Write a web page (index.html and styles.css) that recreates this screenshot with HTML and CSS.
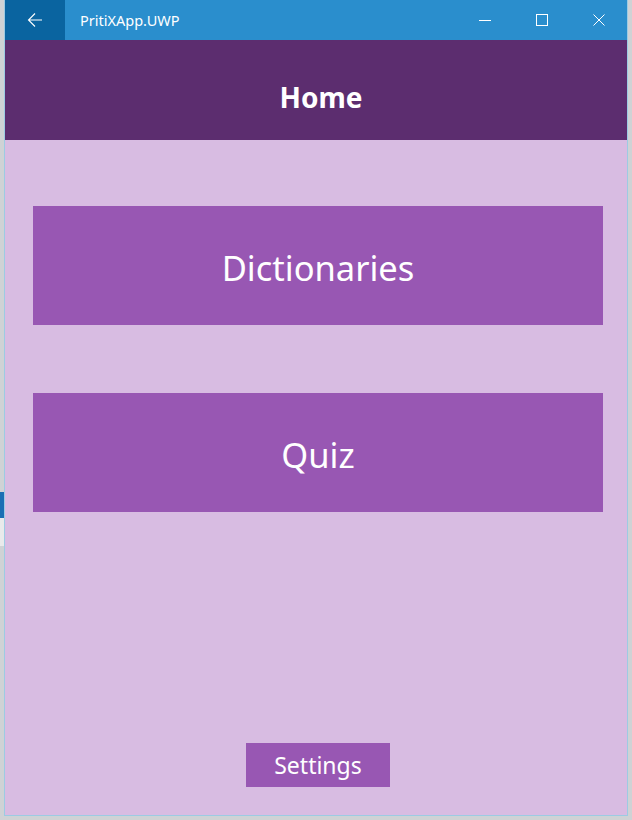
FILE: index.html
```html
<!DOCTYPE html>
<html>
<head>
<meta charset="utf-8">
<link rel="stylesheet" href="styles.css">
</head>
<body>
<div class="desk">
  <div class="desk-strip">
    <div class="strip-blue"></div>
    <div class="strip-light"></div>
  </div>
  <div class="window">
    <div class="titlebar">
      <div class="back">
        <svg width="16" height="16" viewBox="0 0 16 16"><path d="M15 8H1.5M8 1.5L1.5 8L8 14.5" fill="none" stroke="#fff" stroke-width="1.1"/></svg>
      </div>
      <div class="title">PritiXApp.UWP</div>
      <div class="controls">
        <div class="ctl"><svg width="12" height="12" viewBox="0 0 12 12"><path d="M0 6.5H12" stroke="#fff" stroke-width="1"/></svg></div>
        <div class="ctl"><svg width="12" height="12" viewBox="0 0 12 12"><rect x="0.5" y="0.5" width="11" height="11" fill="none" stroke="#fff" stroke-width="1"/></svg></div>
        <div class="ctl"><svg width="12" height="12" viewBox="0 0 12 12"><path d="M0.5 0.5L11.5 11.5M11.5 0.5L0.5 11.5" stroke="#fff" stroke-width="1"/></svg></div>
      </div>
    </div>
    <div class="header">Home</div>
    <div class="content">
      <div class="big-btn first">Dictionaries</div>
      <div class="big-btn second">Quiz</div>
      <div class="spacer"></div>
      <div class="small-btn">Settings</div>
    </div>
  </div>
</div>
</body>
</html>
```
FILE: styles.css
```css
html, body {
  margin: 0;
  padding: 0;
}
body {
  width: 632px;
  height: 820px;
  background: #cfd2d5;
  font-family: "Noto Sans", "Open Sans", sans-serif;
  overflow: hidden;
}
.desk {
  display: flex;
  height: 820px;
}
.desk-strip {
  width: 4px;
  display: flex;
  flex-direction: column;
  padding-top: 492px;
}
.strip-blue {
  height: 26px;
  background: #1a6fb4;
}
.strip-light {
  height: 28px;
  background: #e9eaeb;
}
.window {
  width: 622px;
  height: 815px;
  border: 1px solid #9ccbe3;
  border-top: none;
  display: flex;
  flex-direction: column;
  background: #d8bce2;
}
.titlebar {
  height: 40px;
  background: #2a8ecd;
  display: flex;
  align-items: center;
  color: #fff;
}
.back {
  width: 60px;
  height: 40px;
  background: #0a64a0;
  display: flex;
  align-items: center;
  justify-content: center;
}
.title {
  margin-left: 15px;
  font-size: 14.5px;
  flex: 1;
  padding-bottom: 1px;
}
.controls {
  display: flex;
}
.ctl {
  width: 57px;
  height: 40px;
  display: flex;
  align-items: center;
  justify-content: center;
}
.header {
  height: 100px;
  background: #5c2d6f;
  color: #fff;
  font-weight: 700;
  font-size: 28px;
  display: flex;
  align-items: center;
  justify-content: center;
  padding: 14px 0 0 10px;
  box-sizing: border-box;
}
.content {
  flex: 1;
  display: flex;
  flex-direction: column;
  align-items: center;
  padding: 66px 24px 28px 28px;
}
.big-btn {
  align-self: stretch;
  height: 119px;
  background: #9857b3;
  color: #fff;
  font-size: 34.5px;
  display: flex;
  align-items: center;
  justify-content: center;
  padding-top: 3px;
  box-sizing: border-box;
}
.second {
  margin-top: 68px;
}
.spacer {
  flex: 1;
}
.small-btn {
  width: 144px;
  height: 44px;
  background: #9857b3;
  color: #fff;
  font-size: 23px;
  display: flex;
  align-items: center;
  justify-content: center;
}
```
